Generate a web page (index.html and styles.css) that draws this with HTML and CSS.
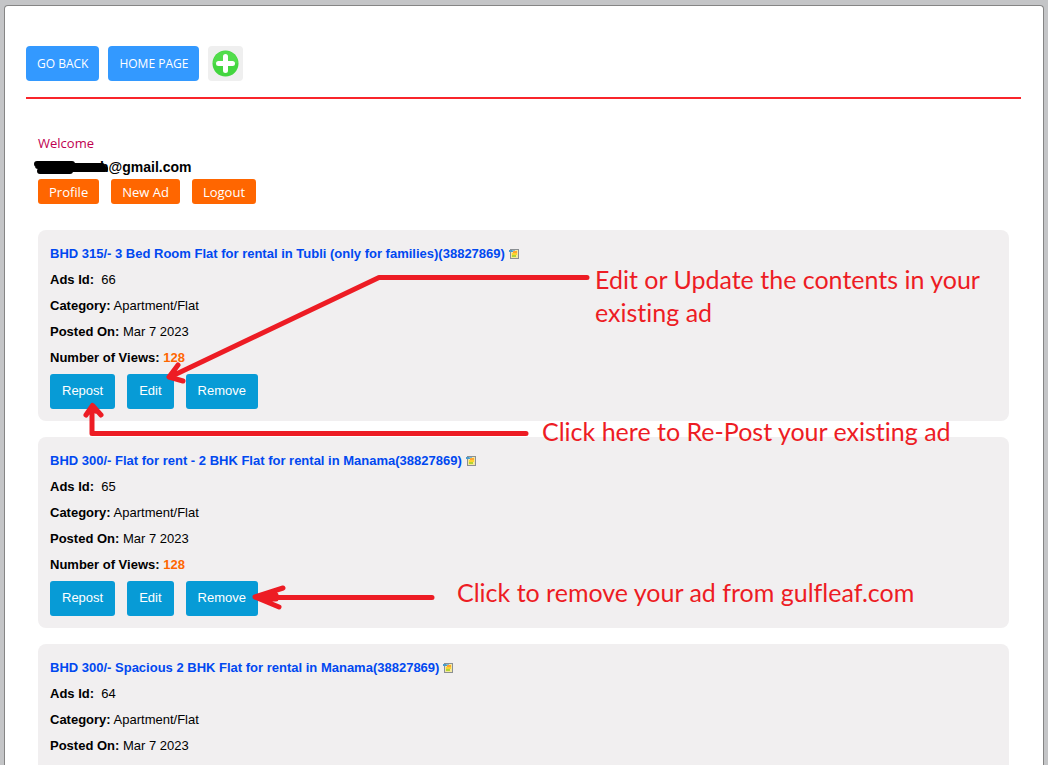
FILE: index.html
```html
<!DOCTYPE html>
<html lang="en">
<head>
<meta charset="utf-8">
<title>My Ads</title>
<link rel="stylesheet" href="styles.css">
</head>
<body>
<svg class="defs" width="0" height="0" aria-hidden="true">
  <symbol id="note" viewBox="0 0 10 10">
    <rect x="1.5" y=".5" width="8" height="9" fill="#f3e9a0" stroke="#8b8f93"/>
    <rect x="4" y="2" width="4" height="2" fill="#ffa531"/>
    <rect x="3" y="4" width="5" height="2" fill="#ffd42e"/>
    <rect x="3" y="6" width="4" height="2" fill="#b5d432"/>
    <rect x="0" y="1" width="4" height="2" fill="#4a9ccc"/>
    <rect x="3" y="1" width="3" height="1" fill="#7dbbd9"/>
  </symbol>
</svg>
<main class="panel">
  <nav class="topbar">
    <button class="nav-btn">GO BACK</button>
    <button class="nav-btn">HOME PAGE</button>
    <button class="add-btn" aria-label="Add">
      <svg width="27" height="27" viewBox="0 0 27 27"><circle cx="13.500" cy="13.500" r="13" fill="#43d63f"/><path d="M1 13.500a12.500 12.500 0 0 1 25 0z" fill="#52dd4c"/><path d="M13.500 6.500v14M6.500 13.500h14" stroke="#fff" stroke-width="5" stroke-linecap="round"/></svg>
    </button>
  </nav>
  <hr class="rule">
  <div class="content">
    <p class="welcome">Welcome</p>
    <p class="email"><svg class="scribble" width="62" height="14" viewBox="0 0 62 14" aria-hidden="true"><path d="M-1 4H34M0 6H64M2 11H32M32 9H67" fill="none" stroke="#000" stroke-width="6" stroke-linecap="round"/></svg><span>h@gmail.com</span></p>
    <div class="account">
      <button class="account-btn">Profile</button>
      <button class="account-btn">New Ad</button>
      <button class="account-btn">Logout</button>
    </div>
    <section class="ads">
      <article class="ad">
        <h2 class="ad-title"><a href="#">BHD 315/- 3 Bed Room Flat for rental in Tubli (only for families)(38827869)</a><svg class="note" aria-hidden="true"><use href="#note"/></svg></h2>
        <p class="row"><b>Ads Id:</b>&nbsp; 66</p>
        <p class="row"><b>Category:</b> Apartment/Flat</p>
        <p class="row"><b>Posted On:</b> Mar 7 2023</p>
        <p class="row"><b>Number of Views: <span class="views">128</span></b></p>
        <div class="actions"><button class="action">Repost</button><button class="action">Edit</button><button class="action">Remove</button></div>
      </article>
      <article class="ad">
        <h2 class="ad-title"><a href="#">BHD 300/- Flat for rent - 2 BHK Flat for rental in Manama(38827869)</a><svg class="note" aria-hidden="true"><use href="#note"/></svg></h2>
        <p class="row"><b>Ads Id:</b>&nbsp; 65</p>
        <p class="row"><b>Category:</b> Apartment/Flat</p>
        <p class="row"><b>Posted On:</b> Mar 7 2023</p>
        <p class="row"><b>Number of Views: <span class="views">128</span></b></p>
        <div class="actions"><button class="action">Repost</button><button class="action">Edit</button><button class="action">Remove</button></div>
      </article>
      <article class="ad ad-last">
        <h2 class="ad-title"><a href="#">BHD 300/- Spacious 2 BHK Flat for rental in Manama(38827869)</a><svg class="note" aria-hidden="true"><use href="#note"/></svg></h2>
        <p class="row"><b>Ads Id:</b>&nbsp; 64</p>
        <p class="row"><b>Category:</b> Apartment/Flat</p>
        <p class="row"><b>Posted On:</b> Mar 7 2023</p>
      </article>
    </section>
  </div>
</main>
<svg class="arrows" width="1048" height="765" viewBox="0 0 1048 765" aria-hidden="true">
  <path d="M587 277.500H379L170 377M178 365L169 377L183 381"/>
  <path d="M526 433.500H92V407M86 415L92.500 405.500L101 415M90 411L92.500 407L96 411"/>
  <path d="M432 597.500H256M283 588L255 597L279 607M262 595H276M262 599H276"/>
</svg>
<p class="callout callout-edit">Edit or Update the contents in your<br>existing ad</p>
<p class="callout callout-repost">Click here to Re-Post your existing ad</p>
<p class="callout callout-remove">Click to remove your ad from gulfleaf.com</p>
</body>
</html>
```
FILE: styles.css
```css
* { box-sizing: border-box; }
body {
  position: relative;
  display: flex;
  flex-direction: column;
  min-height: 100vh;
  margin: 0;
  padding: 5px 4px 0;
  background: #c4c5c7;
  color: #000;
  font: 13px/26px "Liberation Sans", Arial, sans-serif;
}
p, h2 { margin: 0; }
button {
  border: 0;
  color: #fff;
  cursor: pointer;
}
.defs { position: absolute; }
.panel {
  flex: 1;
  padding: 40px 22px 0 21px;
  border: 1px solid #858585;
  border-bottom: 0;
  border-radius: 4px 4px 0 0;
  background: #fff;
}
.topbar { display: flex; gap: 9px; }
.nav-btn {
  height: 35px;
  padding: 0 11px;
  border-radius: 4px;
  background: #39f;
  font: 12px "Open Sans", sans-serif;
}
.add-btn {
  display: flex;
  align-items: center;
  justify-content: center;
  width: 35px;
  height: 35px;
  padding: 0;
  border-radius: 4px;
  background: #efefef;
}
.rule {
  height: 2px;
  margin: 16px 0 32px;
  border: 0;
  background: #f9252b;
}
.content { padding: 0 12px; }
.welcome {
  color: #c00050;
  font: 13px/24px "Open Sans", sans-serif;
}
.email {
  display: flex;
  align-items: center;
  font-size: 14px;
  font-weight: bold;
  line-height: 24px;
}
.scribble { overflow: visible; }
.account { display: flex; gap: 12px; }
.account-btn {
  height: 25px;
  padding: 0 11px;
  border-radius: 3px;
  background: #f60;
  font: 13px "Open Sans", sans-serif;
}
.ads {
  display: flex;
  flex-direction: column;
  gap: 16px;
  margin-top: 26px;
}
.ad {
  padding: 11px 12px 12px;
  border-radius: 8px;
  background: #f1eff0;
}
.ad-last {
  padding-bottom: 6px;
  border-radius: 8px 8px 0 0;
}
.ad-title {
  display: flex;
  align-items: center;
  gap: 4px;
  font-size: 13px;
}
.ad-title a { color: #0048f0; text-decoration: none; }
.note { width: 10px; height: 10px; }
.views { color: #f60; }
.actions { display: flex; gap: 12px; margin-top: 3px; }
.action {
  height: 35px;
  padding: 0 12px 2px;
  border-radius: 3px;
  background: #079bd6;
  font: 13px "Liberation Sans", Arial, sans-serif;
}
.arrows {
  position: absolute;
  top: 0;
  left: 0;
  fill: none;
  stroke: #ed1c24;
  stroke-width: 5;
  stroke-linecap: round;
  stroke-linejoin: round;
  pointer-events: none;
}
.callout {
  position: absolute;
  color: #ed1c24;
  font: 25px/33px Lato, sans-serif;
  font-variant-ligatures: none;
  white-space: nowrap;
}
.callout-edit { top: 263px; left: 595px; }
.callout-repost { top: 415px; left: 542px; }
.callout-remove { top: 576px; left: 457px; }
```
